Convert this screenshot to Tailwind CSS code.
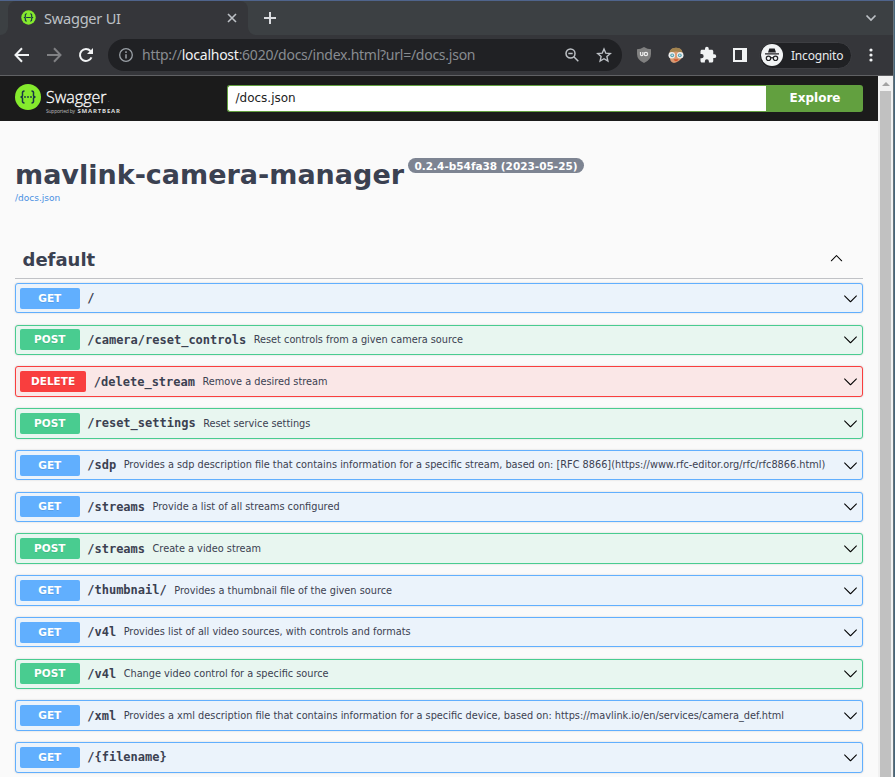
<!DOCTYPE html>
<html lang="en">
<head>
<meta charset="utf-8">
<title>Swagger UI</title>
<script src="https://cdn.jsdelivr.net/npm/@tailwindcss/browser@4"></script>
</head>
<body class="w-[895px] h-[777px] overflow-hidden bg-[#35363a] font-['DejaVu_Sans',sans-serif] text-[#3b4151]">
<div class="w-[895px] h-[777px] flex border-t border-[#4f648c]">
<div class="w-[893px] h-full flex flex-col">
  <!-- Tab strip -->
  <div class="h-[34px] shrink-0 flex bg-[#3c4043] font-['Noto_Sans',sans-serif]">
    <div class="w-2 bg-[#35363a]"><div class="h-full bg-[#3c4043] rounded-br-lg"></div></div>
    <div class="w-[240px] bg-[#35363a] rounded-t-lg flex items-center pl-[13px] pr-[10px]">
      <svg class="w-[15px] h-[15px] mb-px" viewBox="0 0 26 26"><circle cx="13" cy="13" r="12.5" fill="#85ea2d"/><g fill="none" stroke="#173647" stroke-width="2"><path d="M10 6.500q-3 0-2.500 3.500t-2.500 3q3 0 2.500 3t2.500 3.500M16 6.500q3 0 2.500 3.500t2.500 3q-3 0-2.500 3t-2.500 3.500M9 13h8"/></g></svg>
      <span class="ml-2 text-[14.6px] tracking-[-0.25px] leading-5 pb-px text-[#bdc1c6] flex-1">Swagger UI</span>
      <svg class="w-3 h-3" viewBox="0 0 12 12" stroke="#bdc1c6" stroke-width="1.600"><path d="M2 2l8 8M10 2l-8 8"/></svg>
    </div>
    <div class="flex-1 bg-[#35363a]"><div class="h-full bg-[#3c4043] rounded-bl-lg flex items-center pl-[15px] pr-4 justify-between">
      <svg class="w-[14px] h-[14px]" viewBox="0 0 14 14" stroke="#dadce0" stroke-width="2"><path d="M7 1v12M1 7h12"/></svg>
      <svg class="w-3 h-3" viewBox="0 0 12 12" fill="none" stroke="#bdc1c6" stroke-width="1.700"><path d="M1.500 3.500L6 8l4.500-4.500"/></svg>
    </div></div>
  </div>
  <!-- Toolbar -->
  <div class="h-[41px] shrink-0 bg-[#35363a] border-b border-[#606164] flex items-center font-['Noto_Sans',sans-serif]">
    <svg class="ml-[14px] w-4 h-4" viewBox="0 0 16 16" fill="none" stroke="#f1f3f4" stroke-width="2"><path d="M15 8H2M8 1.200L1.500 8 8 14.800"/></svg>
    <svg class="ml-4 w-4 h-4" viewBox="0 0 16 16" fill="none" stroke="#808184" stroke-width="2"><path d="M1 8h13M8 1.200L14.500 8 8 14.800"/></svg>
    <svg class="ml-4 w-4 h-4" viewBox="0 0 16 16"><path d="M13.500 10.300A6 6 0 1 1 12.500 4" fill="none" stroke="#f1f3f4" stroke-width="2"/><path d="M15 1v6H9z" fill="#f1f3f4"/></svg>
    <div class="ml-[14px] w-[514px] h-8 rounded-full bg-[#202124] flex items-center pl-[11px] pr-[10px]">
      <svg class="w-[14px] h-[14px]" viewBox="0 0 14 14"><circle cx="7" cy="7" r="6.300" fill="none" stroke="#9aa0a6" stroke-width="1.300"/><path d="M7 6.200v4.300M7 3.300v1.600" stroke="#9aa0a6" stroke-width="1.500"/></svg>
      <span class="ml-[9px] text-[14px] tracking-[-0.255px] leading-5 text-[#888c91] flex-1 whitespace-nowrap">http://<span class="text-[#f1f3f4]">localhost</span>:6020/docs/index.html?url=/docs.json</span>
      <svg class="w-[14px] h-[14px]" viewBox="0 0 14 14" fill="none" stroke="#bdc1c6" stroke-width="1.500"><circle cx="5.500" cy="5.500" r="4.500"/><path d="M8.800 8.800l4.500 4.500M3.300 5.500h4.400"/></svg>
      <svg class="ml-[17px] w-4 h-4" viewBox="0 0 16 16" fill="none" stroke="#bdc1c6" stroke-width="1.400"><path d="M8 2l1.800 4.200 4.500.4-3.400 3 1 4.400L8 11.700 4.100 14l1-4.400-3.400-3 4.500-.4z"/></svg>
    </div>
    <svg class="ml-[15px] w-[14px] h-4" viewBox="0 0 14 16"><path d="M7 0q3.500 2.200 7 2.200V7q0 6-7 9-7-3-7-9V2.200Q3.500 2.200 7 0z" fill="#808080"/><path d="M3.500 5v2.500q0 1.200 1.200 1.200t1.200-1.200V5" fill="none" stroke="#eee" stroke-width="1.200"/><circle cx="8.900" cy="7" r="1.700" fill="none" stroke="#eee" stroke-width="1.200"/></svg>
    <svg class="ml-[17px] w-4 h-4" viewBox="0 0 16 16"><path d="M1.500 7Q1.500.8 8 .8T14.500 7 8 15.500 1.500 7z" fill="#d99a72"/><path d="M1.500 6Q2 .8 8 .8T14.500 6Q8 3 1.500 6z" fill="#a1834f"/><path d="M5.500 12.300h5q-1 2-2.500 2t-2.500-2z" fill="#d6532c"/><circle cx="3.800" cy="8.300" r="3.300" fill="#eee"/><circle cx="12.200" cy="8.300" r="3.300" fill="#eee"/><circle cx="4.200" cy="8.300" r="1.900" fill="#5aa5b5"/><circle cx="11.800" cy="8.300" r="1.900" fill="#5aa5b5"/><circle cx="4.200" cy="8.300" r=".8" fill="#eee"/><circle cx="11.800" cy="8.300" r=".8" fill="#eee"/></svg>
    <svg class="ml-[15px] w-[18px] h-[18px]" viewBox="0 0 24 24" fill="#f1f3f4"><path d="M20.500 11H19V7c0-1.100-.9-2-2-2h-4V3.500a2.500 2.500 0 0 0-5 0V5H4c-1.100 0-2 .9-2 2v3.800h1.500a2.700 2.700 0 0 1 0 5.400H2V20c0 1.100.9 2 2 2h3.800v-1.500a2.700 2.700 0 0 1 5.400 0V22H17c1.100 0 2-.9 2-2v-4h1.500a2.500 2.500 0 0 0 0-5z"/></svg>
    <svg class="ml-4 w-[14px] h-[14px]" viewBox="0 0 14 14"><path fill="#f1f3f4" fill-rule="evenodd" d="M0 0h14v14H0zM2 2v10h7V2z"/></svg>
    <div class="ml-3 w-[93px] h-[27px] rounded-full bg-[#202124] border border-[#3d3e42] flex items-center pl-px">
      <svg class="w-[22px] h-[22px]" viewBox="0 0 22 22"><circle cx="11" cy="11" r="11" fill="#f1f3f4"/><path d="M7 8.500l1.300-4h5.400l1.300 4zM4 9.200h14v1.300H4z" fill="#202124"/><g fill="none" stroke="#202124" stroke-width="1.200"><circle cx="7.500" cy="14.300" r="2.200"/><circle cx="14.500" cy="14.300" r="2.200"/><path d="M9.700 14q1.300-.8 2.600 0"/></g></svg>
      <span class="ml-2 text-[12px] tracking-[-0.2px] leading-4 pt-px text-[#e8eaed]">Incognito</span>
    </div>
    <svg class="ml-[17px] w-1 h-[14px]" viewBox="0 0 4 14" fill="#f1f3f4"><circle cx="2" cy="2" r="1.600"/><circle cx="2" cy="7" r="1.600"/><circle cx="2" cy="12" r="1.600"/></svg>
  </div>
  <!-- Page viewport -->
  <div class="flex-1 min-h-0 flex bg-[#fafafa]">
    <div class="w-[878px] overflow-hidden">
      <div class="h-[45px] bg-[#1b1b1b] flex items-center pl-[15px] pr-[15px]">
        <svg class="w-[106px] h-[32px] shrink-0 mt-[2px]" viewBox="0 0 106 32"><circle cx="13" cy="13" r="13" fill="#85ea2d"/><g fill="none" stroke="#173647" stroke-width="1.500"><path d="M9.500 7q-2.500 0-2 3t-2 3q2.500 0 2 3t2 3M16.500 7q2.500 0 2 3t2 3q-2.500 0-2 3t-2 3"/></g><g fill="#173647"><circle cx="10" cy="13" r=".9"/><circle cx="13" cy="13" r=".9"/><circle cx="16" cy="13" r=".9"/></g><g fill="#fff" font-family="Open Sans, sans-serif"><text x="31" y="18.500" font-size="17" font-weight="300" stroke="#fff" stroke-width=".3" textLength="60.500" lengthAdjust="spacingAndGlyphs">Swagger</text><text x="93" y="18" font-size="5" fill="#888">.</text><text x="31" y="29" font-size="5" fill="#bbb" textLength="29">Supported by</text><text x="62.500" y="29" font-size="6" font-weight="700" fill="#ddd" textLength="42.500">SMARTBEAR</text></g></svg>
        <div class="ml-[106px] w-[539px] h-[27px] rounded-l-[3px] border border-r-0 border-[#62a03f] bg-white flex items-center pl-[7.500px] pb-[2px] text-[12px] text-[#222]"><span>/docs.json</span></div>
        <div class="w-[97px] h-[27px] rounded-r-[3px] bg-[#62a03f] flex items-center justify-center pb-[2px] pl-px text-[12px] font-bold text-white"><span>Explore</span></div>
      </div>
      <div class="px-[15px]">
        <div class="h-[114px] pt-[37px]">
          <div class="flex items-start whitespace-nowrap"><h2 class="pt-px text-[27px] leading-[32px] font-bold">mavlink-camera-manager</h2><span class="ml-[4px] h-[15px] px-[6.500px] rounded-full bg-[#7d8492] text-white text-[10.5px] leading-[16px] font-bold"><span>0.2.4-b54fa38 (2023-05-25)</span></span></div>
          <div class="mt-px text-[9px] leading-3 text-[#4990e2]"><span>/docs.json</span></div>
        </div>
        <div class="h-[44px] border-b border-[#3b4151]/30 flex items-center justify-between pl-[7.5px] pr-[19px]">
          <h3 class="text-[18px] font-bold pt-[5px]">default</h3>
          <svg class="w-[15px] h-[15px] mt-px" viewBox="0 0 20 20"><path d="M17.418 14.908c-.273.281-.719.281-.987 0L10 8.402l-6.431 6.506c-.268.281-.709.281-.979 0s-.27-.736 0-1.017l6.908-6.969a.697.697 0 0 1 .979 0l6.928 6.969c.27.281.284.736.013 1.017z"/></svg>
        </div>
        <div id="ops" class="pt-[3.750px] flex flex-col gap-[11.250px]"></div>
      </div>
    </div>
    <div class="w-[15px] bg-[#f1f1f1] flex flex-col items-center">
      <div class="h-[15px] flex items-center"><svg class="w-2 h-1" viewBox="0 0 8 4"><path d="M0 4l4-4 4 4z" fill="#a3a3a3"/></svg></div>
      <div class="w-[11px] flex-1 bg-[#c1c1c1]"></div>
    </div>
  </div>
</div>
<div class="w-[2px] bg-[#46657a] border-l border-[#65737c]"></div>
</div>
<script>
const styles = {
  GET: ['border-[#61affe] bg-[#ebf3fb]', 'bg-[#61affe]'],
  POST: ['border-[#49cc90] bg-[#e8f6f0]', 'bg-[#49cc90]'],
  DELETE: ['border-[#f93e3e] bg-[#fae7e7]', 'bg-[#f93e3e]']
};
const ops = [
  ['GET', '/', ''],
  ['POST', '/camera/reset_controls', 'Reset controls from a given camera source'],
  ['DELETE', '/delete_stream', 'Remove a desired stream'],
  ['POST', '/reset_settings', 'Reset service settings'],
  ['GET', '/sdp', 'Provides a sdp description file that contains information for a specific stream, based on: [RFC 8866](https://www.rfc-editor.org/rfc/rfc8866.html)'],
  ['GET', '/streams', 'Provide a list of all streams configured'],
  ['POST', '/streams', 'Create a video stream'],
  ['GET', '/thumbnail/', 'Provides a thumbnail file of the given source'],
  ['GET', '/v4l', 'Provides list of all video sources, with controls and formats'],
  ['POST', '/v4l', 'Change video control for a specific source'],
  ['GET', '/xml', 'Provides a xml description file that contains information for a specific device, based on: https://mavlink.io/en/services/camera_def.html'],
  ['GET', '/{filename}', '']
];
document.getElementById('ops').innerHTML = ops.map(([m, path, desc]) => `
  <div class="h-[30.5px] shrink-0 flex items-center rounded-[3px] border px-[3.750px] shadow-[0_0_2px_rgba(0,0,0,0.19)] whitespace-nowrap ${styles[m][0]}">
    <span class="min-w-[60px] h-[21px] px-[11.250px] rounded-[2px] text-center text-[10.5px] leading-[21px] font-bold text-white [text-shadow:0_1px_0_rgba(0,0,0,0.1)] ${styles[m][1]}">${m}</span>
    <span class="ml-[7.5px] font-['DejaVu_Sans_Mono',monospace] text-[12px] leading-4 font-bold">${path}</span>
    <span class="ml-[7.5px] pt-[0.8px] text-[9.75px] leading-4 flex-1">${desc}</span>
    <svg class="w-[15px] h-[15px] shrink-0" viewBox="0 0 20 20"><path d="M17.418 6.109c.272-.268.709-.268.979 0s.271.701 0 .969l-7.908 7.830c-.27.268-.707.268-.979 0l-7.908-7.830c-.27-.268-.27-.701 0-.969.271-.268.709-.268.979 0L10 13.250l7.418-7.141z"/></svg>
  </div>`).join('');
</script>
</body>
</html>
